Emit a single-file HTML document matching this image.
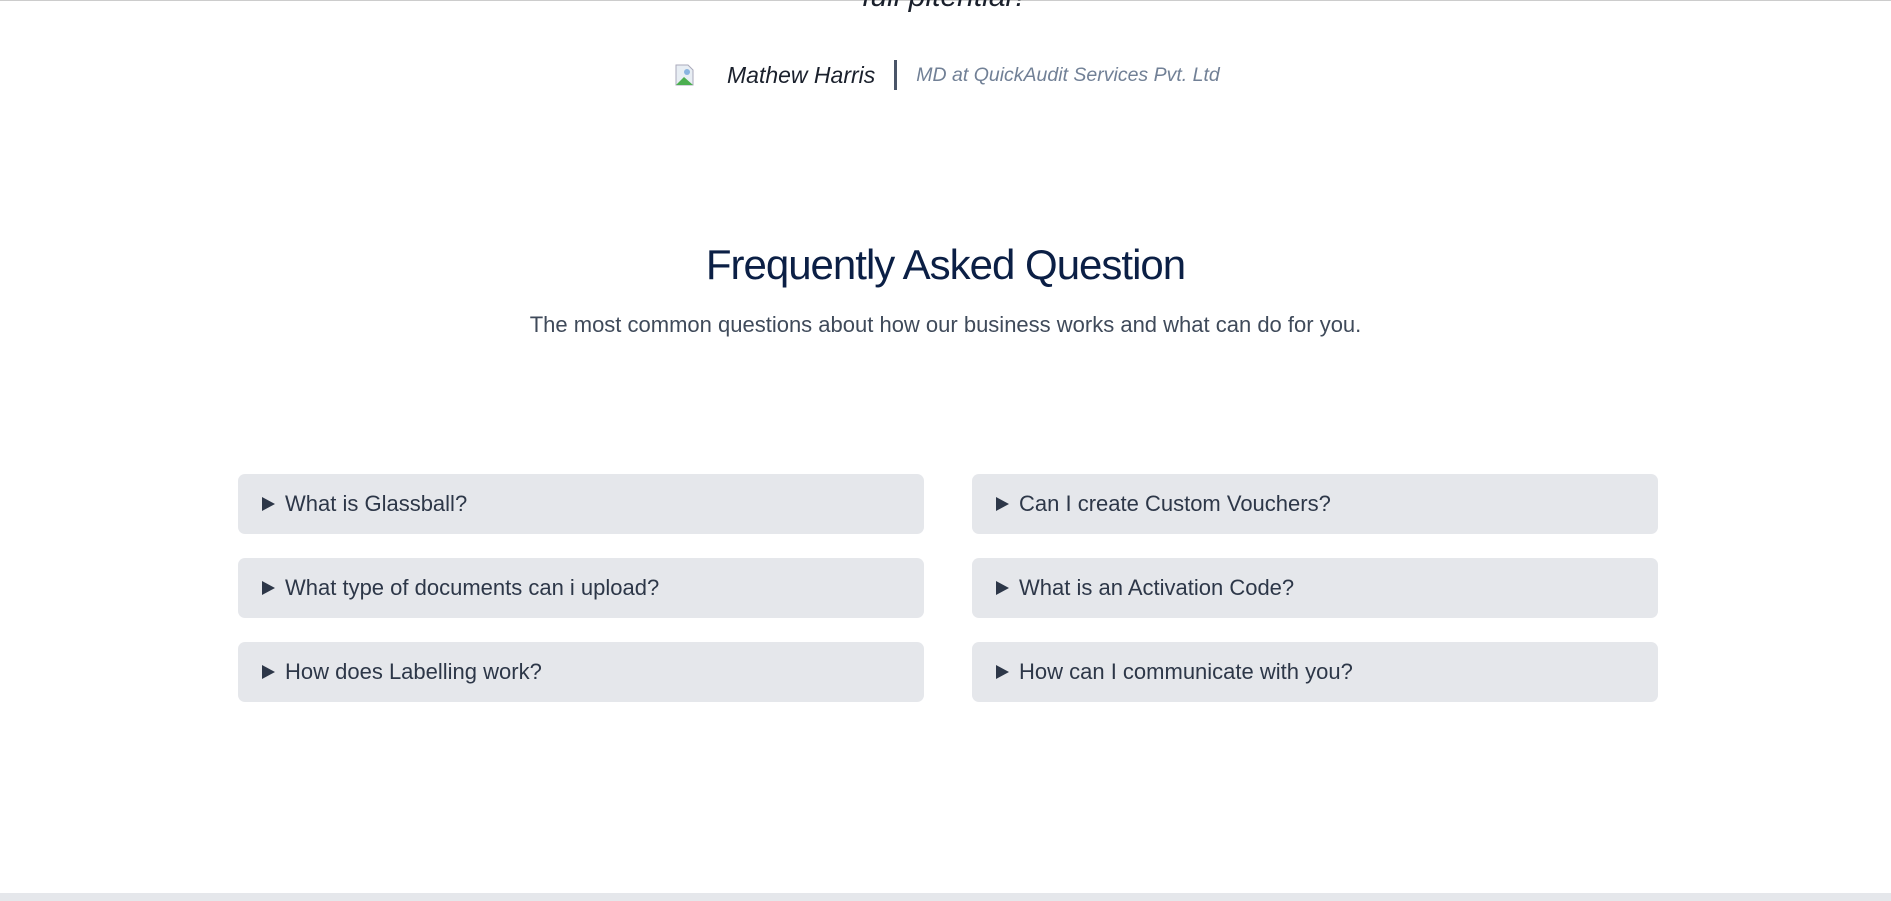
<!DOCTYPE html>
<html><head><style>
*{margin:0;padding:0;box-sizing:border-box}
html,body{width:1891px;height:901px;overflow:hidden;background:#fff;font-family:"Liberation Sans",sans-serif;position:relative}
.top{position:absolute;top:0;left:0;width:1891px;height:1px;background:#ccc}
.quote{position:absolute;top:-20px;left:0;width:1891px;text-align:center;font-style:italic;font-size:30px;color:#1a202c}
.author{position:absolute;top:60px;left:673px;height:30px;display:flex;align-items:center;font-style:italic}
.img{width:24px;height:24px;position:relative;margin-right:30px}
.name{font-size:23px;color:#1a202c}
.sep{width:3px;height:30px;background:#4a5568;margin:0 19px}
.role{font-size:19.5px;color:#718096}
h2{position:absolute;top:241px;left:0;width:1891px;text-align:center;font-weight:normal;font-size:42px;color:#0b1f45;letter-spacing:-1px}
.sub{position:absolute;top:312px;left:0;width:1891px;text-align:center;font-size:22px;color:#3f4a5a}
.card{position:absolute;width:686px;height:60px;background:#e5e7eb;border-radius:7px;font-size:22px;color:#2d3748;display:flex;align-items:center;padding-left:24px}
.card span.t{display:inline-block;width:0;height:0;border-top:7px solid transparent;border-bottom:7px solid transparent;border-left:13px solid #2d3748;margin-right:10px}
.bot{position:absolute;left:0;top:893px;width:1891px;height:8px;background:#e5e7eb}
</style></head><body>
<div class="top"></div>
<div class="quote">full pitential?</div>
<div class="author">
<div class="img"><svg width="24" height="24"><path d="M3 2h12l5 5v15H3z" fill="#e8eef4" stroke="#aab" /><path d="M3 22l8-8 9 8z" fill="#4caf50"/><circle cx="14" cy="9" r="3" fill="#8ab4e0"/></svg></div>
<span class="name">Mathew Harris</span><div class="sep"></div><span class="role">MD at QuickAudit Services Pvt. Ltd</span>
</div>
<h2>Frequently Asked Question</h2>
<div class="sub">The most common questions about how our business works and what can do for you.</div>
<div class="card" style="left:238px;top:474px"><span class="t"></span>What is Glassball?</div>
<div class="card" style="left:972px;top:474px"><span class="t"></span>Can I create Custom Vouchers?</div>
<div class="card" style="left:238px;top:558px"><span class="t"></span>What type of documents can i upload?</div>
<div class="card" style="left:972px;top:558px"><span class="t"></span>What is an Activation Code?</div>
<div class="card" style="left:238px;top:642px"><span class="t"></span>How does Labelling work?</div>
<div class="card" style="left:972px;top:642px"><span class="t"></span>How can I communicate with you?</div>
<div class="bot"></div>
</body></html>
